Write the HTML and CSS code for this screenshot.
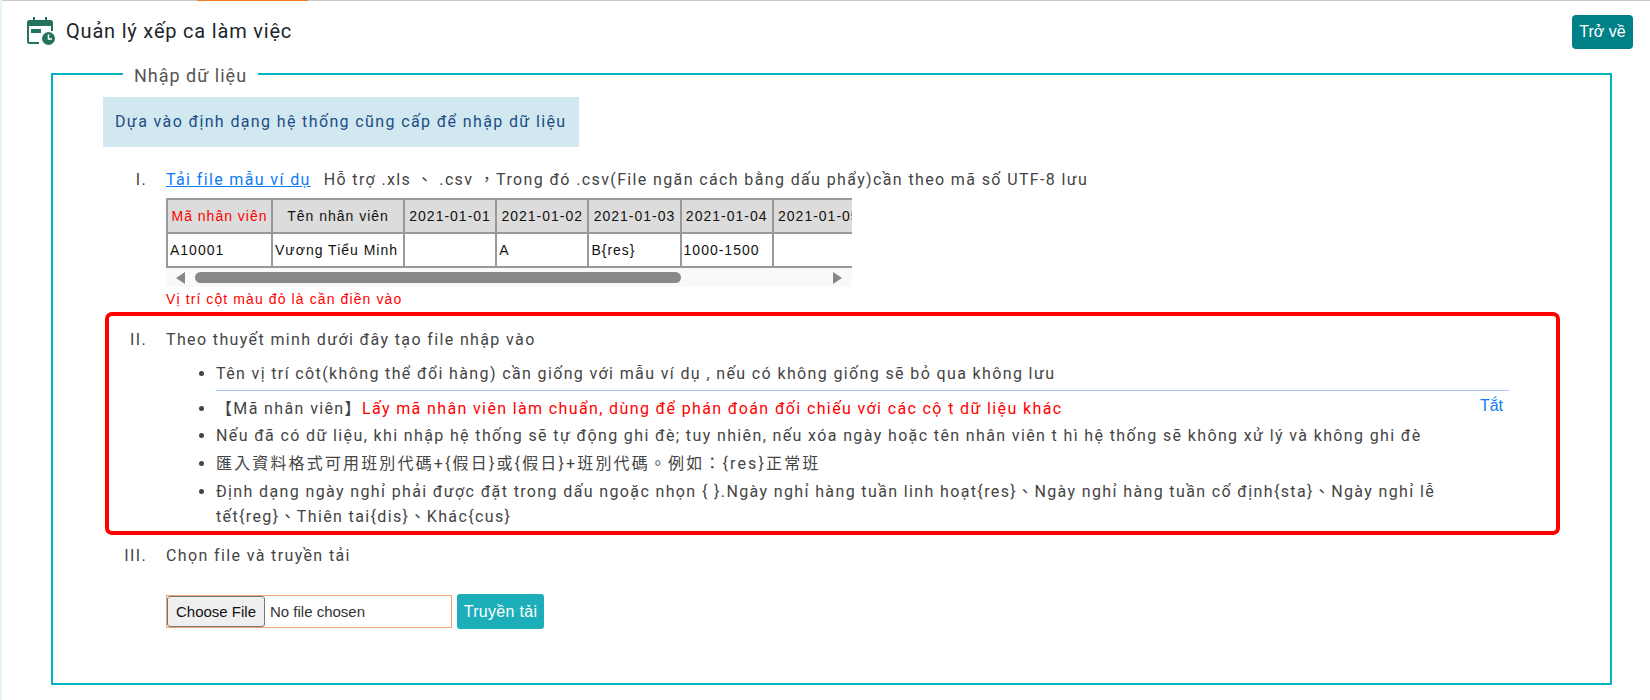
FILE: index.html
```html
<!DOCTYPE html>
<html lang="vi">
<head>
<meta charset="utf-8">
<title>Quản lý xếp ca làm việc</title>
<link rel="stylesheet" href="styles.css">
</head>
<body>
<div class="topline"><span class="topline-active"></span></div>
<header class="head">
  <div class="head-title">
    <svg class="head-icon" width="28" height="28" viewBox="0 0 28 28" aria-hidden="true">
      <path d="M6 0h2v4H6zM18 0h2v4h-2z" fill="#23735f"/>
      <path d="M2.500 3h21A2.500 2.500 0 0 1 26 5.500V14h-2V9H2v16h10v2H2.500A2.500 2.500 0 0 1 0 24.500V5.500A2.500 2.500 0 0 1 2.500 3z" fill="#23735f"/>
      <rect x="4" y="12" width="10" height="4" fill="#23735f"/>
      <circle cx="21.500" cy="21.500" r="6.500" fill="#23735f"/>
      <path d="M21.500 17.500V22H25" fill="none" stroke="#fff" stroke-width="1.500"/>
    </svg>
    <h1 class="head-text">Quản lý xếp ca làm việc</h1>
  </div>
  <button class="back-btn" type="button">Trở về</button>
</header>
<fieldset class="panel">
  <legend class="panel-legend">Nhập dữ liệu</legend>
  <div class="info">Dựa vào định dạng hệ thống cũng cấp để nhập dữ liệu</div>
  <ol class="steps">
    <li class="step step-one">
      <a class="sample-link" href="#">Tải file mẫu ví dụ</a><span class="sample-note">Hỗ trợ .xls 、 .csv ，Trong đó .csv(File ngăn cách bằng dấu phẩy)cần theo mã số UTF-8 lưu</span>
      <div class="sample">
        <div class="sample-clip">
          <table class="sample-table">
            <colgroup><col class="c1"><col class="c2"><col class="c3"><col class="c3"><col class="c3"><col class="c3"><col class="c3"></colgroup>
            <tr><th class="req">Mã nhân viên</th><th>Tên nhân viên</th><th>2021-01-01</th><th>2021-01-02</th><th>2021-01-03</th><th>2021-01-04</th><th>2021-01-05</th></tr>
            <tr><td>A10001</td><td>Vương Tiểu Minh</td><td></td><td>A</td><td>B{res}</td><td>1000-1500</td><td></td></tr>
          </table>
        </div>
        <div class="fake-scroll">
          <span class="arrow arrow-left"></span>
          <span class="thumb"></span>
          <span class="arrow arrow-right"></span>
        </div>
      </div>
      <p class="req-note">Vị trí cột màu đỏ là cần điền vào</p>
    </li>
    <li class="step step-two">
      Theo thuyết minh dưới đây tạo file nhập vào
      <ul class="rules">
        <li class="rule-first">Tên vị trí côt(không thể đổi hàng) cần giống với mẫu ví dụ , nếu có không giống sẽ bỏ qua không lưu</li>
        <li class="rule-key">【Mã nhân viên】<span class="req-text">Lấy mã nhân viên làm chuẩn, dùng để phán đoán đối chiếu với các cộ t dữ liệu khác</span><a class="close-link" href="#">Tắt</a></li>
        <li>Nếu đã có dữ liệu, khi nhập hệ thống sẽ tự động ghi đè; tuy nhiên, nếu xóa ngày hoặc tên nhân viên t hì hệ thống sẽ không xử lý và không ghi đè</li>
        <li class="rule-cjk">匯入資料格式可用班別代碼+{假日}或{假日}+班別代碼。例如：{res}正常班</li>
        <li>Định dạng ngày nghỉ phải được đặt trong dấu ngoặc nhọn { }.Ngày nghỉ hàng tuần linh hoạt{res}、Ngày nghỉ hàng tuần cố định{sta}、Ngày nghỉ lễ tết{reg}、Thiên tai{dis}、Khác{cus}</li>
      </ul>
    </li>
    <li class="step step-three">
      Chọn file và truyền tải
      <div class="upload">
        <input class="file" type="file">
        <button class="upload-btn" type="button">Truyền tải</button>
      </div>
    </li>
  </ol>
</fieldset>
</body>
</html>
```
FILE: styles.css
```css
html, body { margin: 0; padding: 0; background: #fff; height: 700px; overflow: hidden; }
body {
  font-family: Roboto, "Noto Sans CJK TC", sans-serif;
  font-size: 16px;
  color: #444;
  border-left: 2px solid #e6f3f7;
  box-sizing: border-box;
}
.topline { height: 1px; background: #c8c8c8; margin-left: -2px; }
.topline-active { display: block; width: 111px; height: 1px; margin-left: 197px; background: #f47a20; }

.head { display: flex; align-items: flex-start; justify-content: space-between; padding: 14px 17px 0 27px; height: 57px; box-sizing: border-box; margin-left: -2px; }
.head-title { display: flex; align-items: center; gap: 11px; padding-top: 2px; }
.head-icon { display: block; }
.head-text { margin: 0; font-size: 20px; font-weight: 400; letter-spacing: 0.8px; color: #212529; }
.back-btn {
  width: 61px; height: 34px; border: 0; border-radius: 4px; background: #008087; color: #fff;
  font-family: "Liberation Sans", sans-serif; font-size: 16px; padding: 0;
}

.panel {
  margin: 4px 38px 0 49px; padding: 11px 0 0 50px; height: 623px; box-sizing: border-box;
  border: 2px solid #00b4c0; min-width: 0;
}
.panel-legend { margin-left: 20px; padding: 4px 11px 0; font-size: 18px; letter-spacing: 1px; color: #555; line-height: 20px; }
.info {
  display: inline-block; padding: 15px 12px; height: 50px; box-sizing: border-box;
  background: #d1e8f1; color: #1c4d85; letter-spacing: 1.37px; line-height: 20px;
}

.steps { list-style: upper-roman; margin: 0; padding: 22px 0 0 63px; letter-spacing: 1.37px; line-height: 22px; }
.step { position: relative; }
.step::marker { content: counter(list-item, upper-roman) ".\00a0\00a0\00a0\200a"; }
.sample-link { color: #0d7bf2; }
.sample-note { margin-left: 13px; }
.sample { width: 686px; margin-top: 7px; }
.sample-clip { overflow: hidden; }
.sample-table { border-collapse: collapse; table-layout: fixed; width: 698px; font-family: "Liberation Sans", sans-serif; font-size: 14px; letter-spacing: 1px; color: #111; line-height: 16px; }
.c1 { width: 105px; } .c2 { width: 132px; } .c3 { width: 92.200px; }
.sample-table th, .sample-table td { border: 2px solid #999; height: 32px; padding: 0 2px; white-space: nowrap; overflow: hidden; text-align: left; font-weight: 400; }
.sample-table th { background: #dcdcdc; text-align: center; }
.sample-table th.req { color: #f00; }
.fake-scroll { display: flex; align-items: center; height: 19px; background: #f9f9f9; }
.arrow { width: 0; height: 0; border-style: solid; }
.arrow-left { margin-left: 10px; border-width: 6px 9px 6px 0; border-color: transparent #888 transparent transparent; }
.thumb { width: 486px; height: 11px; border-radius: 6px; background: #888; margin-left: 10px; }
.arrow-right { margin-left: auto; margin-right: 10px; border-width: 6px 0 6px 9px; border-color: transparent transparent transparent #888; }
.req-note { margin: 0; padding-top: 1px; color: #f00; font-family: "Liberation Sans", sans-serif; font-size: 14px; letter-spacing: 1.1px; line-height: 22px; }

.step-two { margin-top: 19px; }
.step-two::before {
  content: ""; position: absolute; left: -61px; top: -17px; width: 1455px; height: 223px; box-sizing: border-box;
  border: 4px solid #f00; border-radius: 7px; pointer-events: none;
}
.rules { list-style: disc; margin: 0; padding: 10px 0 0 50px; width: 1293px; box-sizing: content-box; line-height: 25px; }
.rules li { margin-bottom: 3px; }
.rules .rule-first { margin-bottom: 0; padding-bottom: 4px; border-bottom: 1px solid #a8c5f5; }
.rules .rule-key { position: relative; margin-top: 5px; margin-bottom: 2px; }
.rules .rule-cjk { letter-spacing: 2.15px; }
.req-text { color: #f00; }
.close-link { position: absolute; right: 6px; top: -3px; color: #0d7bf2; text-decoration: none; letter-spacing: 0; font-family: "Liberation Sans", sans-serif; }
.step-three { margin-top: 16px; }
.upload { display: flex; align-items: center; gap: 5px; margin-top: 27px; }
.file { width: 286px; height: 33px; box-sizing: border-box; border: 1px solid #f0a47a; padding: 0; font-family: "Liberation Sans", sans-serif; font-size: 15px; letter-spacing: 0; background: #fff; color: #333; }
.file::file-selector-button { width: 98px; height: 31px; margin: 0 5px 0 0; border: 1px solid #777; border-radius: 3px; background: #efefef; color: #111; font: inherit; }
.upload-btn { width: 87px; height: 35px; border: 0; border-radius: 3px; background: #1cafb9; color: #fff; font-family: "Liberation Sans", sans-serif; font-size: 16px; letter-spacing: 0.3px; padding: 0; }
```
